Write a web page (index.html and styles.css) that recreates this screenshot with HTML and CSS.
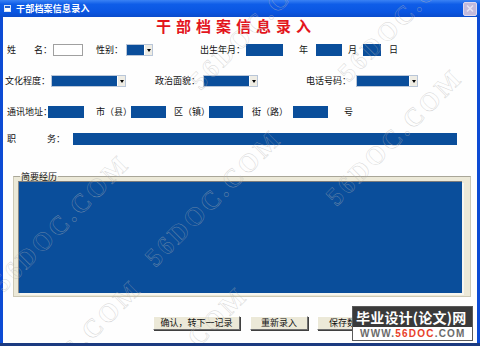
FILE: index.html
```html
<!DOCTYPE html>
<html lang="zh">
<head>
<meta charset="utf-8">
<title>干部档案信息录入</title>
<link rel="stylesheet" href="styles.css">
</head>
<body>
<div class="window">
  <div class="titlebar">
    <span class="ticon"><span class="ticon-bar"></span></span>
    <span class="ttext">干部档案信息录入</span>
    <span class="close">
      <svg width="12" height="11" viewBox="0 0 12 11"><path d="M3 2.5 L9 8.5 M9 2.5 L3 8.5" stroke="#e6e2f2" stroke-width="1.6" fill="none"/></svg>
    </span>
  </div>
  <div class="client">
    <h1 class="heading">干部档案信息录入</h1>

    <div class="row r1">
      <span class="lbl w46">姓　　名：</span>
      <span class="fld input w30"></span>
      <span class="lbl ml13 w30">性别：</span>
      <span class="fld sel w27"><span class="arrow"><i class="tri"></i></span></span>
      <span class="lbl ml47 w46">出生年月：</span>
      <span class="fld w37"></span>
      <span class="lbl ml16 w17">年</span>
      <span class="fld w26"></span>
      <span class="lbl ml6 w15">月</span>
      <span class="fld w18"></span>
      <span class="lbl ml8">日</span>
    </div>

    <div class="row r2">
      <span class="lbl w46">文化程度：</span>
      <span class="fld sel w75"><span class="arrow"><i class="tri"></i></span></span>
      <span class="lbl ml29 w48">政治面貌：</span>
      <span class="fld sel w55"><span class="arrow"><i class="tri"></i></span></span>
      <span class="lbl ml48 w50">电话号码：</span>
      <span class="fld sel w62"><span class="arrow"><i class="tri"></i></span></span>
    </div>

    <div class="row r3">
      <span class="lbl w41">通讯地址：</span>
      <span class="fld w36"></span>
      <span class="lbl ml12 w35">市（县）</span>
      <span class="fld w35"></span>
      <span class="lbl ml8 w35">区（镇）</span>
      <span class="fld w34"></span>
      <span class="lbl ml9 w41">街（路）</span>
      <span class="fld w35"></span>
      <span class="lbl ml16">号</span>
    </div>

    <div class="row r4">
      <span class="lbl w40">职</span>
      <span class="lbl w26">务：</span>
      <span class="fld w384"></span>
    </div>

    <fieldset class="group">
      <legend class="legend">简要经历</legend>
      <div class="memo"></div>
    </fieldset>

    <div class="buttons">
      <span class="btn ml150 w87">确认，转下一记录</span>
      <span class="btn ml10 w58">重新录入</span>
      <span class="btn ml9 w60">保存数据</span>
    </div>
  </div>

  <span class="wm wm1">56DOC.COM</span>
  <span class="wm wm2">56DOC.COM</span>
  <span class="wm wm3">56DOC.COM</span>
  <span class="wm wm4">56DOC.COM</span>
  <span class="wm wm5">56DOC.COM</span>
  <span class="wm wm6">56DOC.COM</span>
  <span class="wm wm7">56DOC.COM</span>

  <div class="logo">
    <div class="logo-top">毕业设计(论文)网</div>
    <div class="logo-bottom">WWW.<span class="logo-red">56DOC</span>.COM</div>
  </div>
</div>
</body>
</html>
```

FILE: styles.css
```css
* { box-sizing: border-box; }

html, body {
  margin: 0;
  padding: 0;
  width: 480px;
  height: 346px;
  overflow: hidden;
  background: #fff;
  font-family: "Noto Sans CJK SC", "Noto Sans", sans-serif;
  color: #111;
}

.window {
  position: relative;
  width: 480px;
  height: 346px;
  display: flex;
  flex-direction: column;
  background: #0c4bd4;
  border-bottom: 3px solid #1b3a80;
  overflow: hidden;
}

/* Title bar */
.titlebar {
  flex: none;
  height: 17px;
  display: flex;
  align-items: center;
  padding: 0 3px 0 4px;
  background: linear-gradient(#3a82f4 0%, #0f5de8 25%, #0a56e2 70%, #0a4ccc 100%);
  color: #fff;
}

.ticon {
  width: 7px;
  height: 7px;
  background: #fff;
  border: 1px solid #d8e4f8;
  display: flex;
  align-items: flex-start;
}

.ticon-bar {
  width: 100%;
  height: 2px;
  background: #2060d0;
}

.ttext {
  margin-left: 5px;
  font-size: 9px;
  line-height: 17px;
  font-weight: bold;
  letter-spacing: 0.2px;
}

.close {
  margin-left: auto;
  width: 14px;
  height: 14px;
  display: flex;
  align-items: center;
  justify-content: center;
  background: #c2badc;
  border: 1px solid #ddd8ee;
  border-radius: 2px;
}

/* Client area */
.client {
  flex: 1;
  margin: 0 3px;
  background: #fefefe;
  display: flex;
  flex-direction: column;
}

.heading {
  margin: 1px 0 0;
  height: 16px;
  font-size: 15px;
  line-height: 16px;
  font-weight: bold;
  color: #e3151c;
  text-align: center;
  letter-spacing: 5px;
  padding-right: 8px;
}

.row {
  display: flex;
  align-items: center;
  height: 12px;
  font-size: 9px;
  line-height: 12px;
  white-space: nowrap;
}

.r1 { margin-top: 10px; padding-left: 4px; }
.r2 { margin-top: 19px; padding-left: 2px; }
.r3 { margin-top: 19px; padding-left: 4px; }
.r4 { margin-top: 15px; padding-left: 4px; }

.lbl { flex: none; overflow: visible; }

.fld {
  flex: none;
  height: 12px;
  background: #0a4e9b;
}

.input {
  background: #fff;
  border: 1px solid #a0a0a0;
}

.sel {
  display: flex;
  justify-content: flex-end;
  border: 1px solid #b9c6d8;
}

.arrow {
  width: 8px;
  height: 100%;
  background: #eeece4;
  border-left: 1px solid #fff;
  display: flex;
  align-items: center;
  justify-content: center;
}

.tri {
  width: 0;
  height: 0;
  border-left: 2.5px solid transparent;
  border-right: 2.5px solid transparent;
  border-top: 3px solid #000;
}

/* widths */
.w15 { width: 15px; } .w17 { width: 17px; } .w18 { width: 18px; }
.w26 { width: 26px; } .w27 { width: 27px; } .w30 { width: 30px; }
.w34 { width: 34px; } .w35 { width: 35px; } .w36 { width: 36px; }
.w37 { width: 37px; } .w40 { width: 40px; } .w41 { width: 41px; }
.w46 { width: 46px; } .w48 { width: 48px; } .w50 { width: 50px; }
.w55 { width: 55px; } .w58 { width: 58px; } .w60 { width: 60px; }
.w62 { width: 62px; } .w75 { width: 75px; } .w87 { width: 87px; }
.w384 { width: 384px; }

/* margins */
.ml6 { margin-left: 6px; } .ml8 { margin-left: 8px; } .ml9 { margin-left: 9px; }
.ml10 { margin-left: 10px; } .ml12 { margin-left: 12px; } .ml13 { margin-left: 13px; }
.ml16 { margin-left: 16px; } .ml29 { margin-left: 29px; } .ml47 { margin-left: 47px; }
.ml48 { margin-left: 48px; } .ml150 { margin-left: 150px; }

/* Group box */
.group {
  margin: 27px 0 0 10px;
  width: 458px;
  min-width: 0;
  padding: 0 8px 3px 4px;
  background: #ece9d8;
  border: 1px solid #cdc9b6;
  border-top-color: #a9a698;
}

.legend {
  font-size: 9px;
  line-height: 9px;
  height: 9px;
  padding: 0 1px;
  margin-left: 2px;
  color: #111;
}

.memo {
  height: 112px;
  background: #0a4e9b;
  border-top: 1px solid #7c7c7c;
  border-left: 1px solid #8a8a8a;
  box-shadow: 2px 2px 0 #f7f6f0;
}

/* Buttons */
.buttons {
  margin-top: 19px;
  display: flex;
  height: 14px;
}

.btn {
  flex: none;
  height: 14px;
  font-size: 9px;
  line-height: 12px;
  text-align: center;
  white-space: nowrap;
  background: #ece9d8;
  border: 1px solid;
  border-color: #ffffff #6f6f6f #6f6f6f #ffffff;
  box-shadow: 1px 1px 0 #404040;
}

/* Watermarks (overlay) */
.wm {
  position: absolute;
  width: 176px;
  height: 30px;
  font: bold 26px/30px "Liberation Serif", serif;
  letter-spacing: 3px;
  color: transparent;
  -webkit-text-stroke: 0.5px rgba(180, 180, 180, 0.55);
  white-space: nowrap;
  transform: rotate(-45deg);
  pointer-events: none;
}

.wm1 { left: -28px; top: 210px; }
.wm2 { left: 124px; top: 185px; }
.wm3 { left: 169px; top: 8px; }
.wm4 { left: 305px; top: 124px; }
.wm5 { left: -16px; top: 335px; }
.wm6 { left: 317px; top: 0px; }
.wm7 { left: 90px; top: 342px; }

/* Logo overlay */
.logo {
  position: absolute;
  left: 352px;
  top: 306px;
  width: 121px;
  height: 35px;
  border: 1px solid #5a5a5a;
  background: #fff;
  display: flex;
  flex-direction: column;
}

.logo-top {
  height: 20px;
  background: #3a3a3a;
  color: #fff;
  font-size: 14px;
  line-height: 20px;
  font-weight: bold;
  padding-left: 3px;
  white-space: nowrap;
  letter-spacing: 0.2px;
}

.logo-bottom {
  flex: 1;
  font-family: "Liberation Sans", sans-serif;
  font-size: 10px;
  line-height: 13px;
  font-weight: bold;
  color: #6b6b6b;
  padding-left: 7px;
  letter-spacing: 1.2px;
  white-space: nowrap;
}

.logo-red { color: #e8402a; }
```
